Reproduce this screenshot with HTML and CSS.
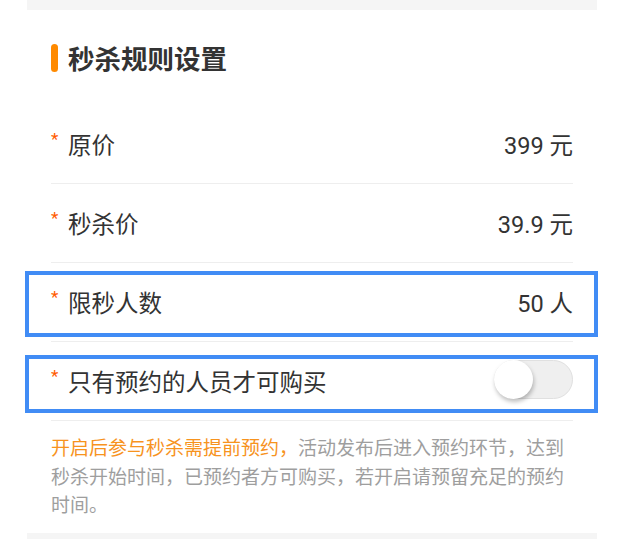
FILE: index.html
```html
<!DOCTYPE html>
<html lang="zh-CN">
<head>
  <meta charset="UTF-8">
  <title>秒杀规则设置</title>
  <link rel="stylesheet" href="styles.css">
</head>
<body>
  <div class="page">
    <div class="gap"></div>
    <div class="card">
      <h2 class="card-title"><span class="title-bar"></span>秒杀规则设置</h2>

      <div class="row">
        <div class="label"><span class="req">*</span>原价</div>
        <div class="value">399 元</div>
      </div>
      <div class="row">
        <div class="label"><span class="req">*</span>秒杀价</div>
        <div class="value">39.9 元</div>
      </div>
      <div class="row">
        <div class="label"><span class="req">*</span>限秒人数</div>
        <div class="value">50 人</div>
      </div>
      <div class="row">
        <div class="label"><span class="req">*</span>只有预约的人员才可购买</div>
        <div class="switch"><span class="knob"></span></div>
      </div>

      <p class="tip"><span class="tip-hl">开启后参与秒杀需提前预约，</span>活动发布后进入预约环节，达到秒杀开始时间，已预约者方可购买，若开启请预留充足的预约时间。</p>

      <div class="mark mark-limit"></div>
      <div class="mark mark-switch"></div>
    </div>
    <div class="gap"></div>
  </div>
</body>
</html>
```

FILE: styles.css
```css
:root {
  --orange: #ff8a00;
  --req-color: #ff5a00;
  --text: #333;
  --muted: #9e9e9e;
  --line: #eeeeee;
  --gray-bg: #f5f5f5;
  --mark: #418cf5;
}
body {
  margin: 0;
  background: #fff;
  font-family: "Roboto", "Noto Sans CJK SC", sans-serif;
  color: var(--text);
}
.page {
  width: 570px;
  margin-left: 27px;
}
.gap {
  height: 10px;
  background: var(--gray-bg);
}
.card {
  position: relative;
  background: #fff;
  padding: 0 24px;
}
.card-title {
  display: flex;
  align-items: center;
  height: 95px;
  margin: 0;
  font-family: "Noto Sans CJK SC", sans-serif;
  font-size: 26.5px;
  font-weight: bold;
  color: #333;
}
.title-bar {
  width: 7px;
  height: 28px;
  border-radius: 4px;
  background: var(--orange);
  margin-right: 10px;
}
.row {
  display: flex;
  align-items: center;
  justify-content: space-between;
  height: 78px;
  border-bottom: 1px solid var(--line);
  font-size: 23.5px;
}
.label {
  display: flex;
  align-items: center;
}
.req {
  color: var(--req-color);
  font-size: 17px;
  width: 17px;
  margin-top: -10px;
}
.value {
  color: var(--text);
}
.switch {
  width: 77px;
  height: 37px;
  border: 1px solid #e0e0e0;
  border-radius: 20px;
  background: #efefef;
  position: relative;
  margin-top: -3px;
}
.knob {
  position: absolute;
  left: -1px;
  top: -1px;
  width: 39px;
  height: 39px;
  border-radius: 50%;
  background: #fff;
  box-shadow: 1px 3px 4px rgba(0, 0, 0, 0.25);
}
.tip {
  margin: 0;
  padding: 12px 0 14px;
  font-size: 19px;
  line-height: 28.5px;
  color: var(--muted);
  font-family: "Noto Sans CJK SC", sans-serif;
}
.tip-hl {
  color: #f7931e;
}
.mark {
  position: absolute;
  left: -2px;
  right: -1px;
  border: 4px solid var(--mark);
}
.mark-limit {
  top: 261px;
  height: 58px;
}
.mark-switch {
  top: 345px;
  height: 50px;
}
```
